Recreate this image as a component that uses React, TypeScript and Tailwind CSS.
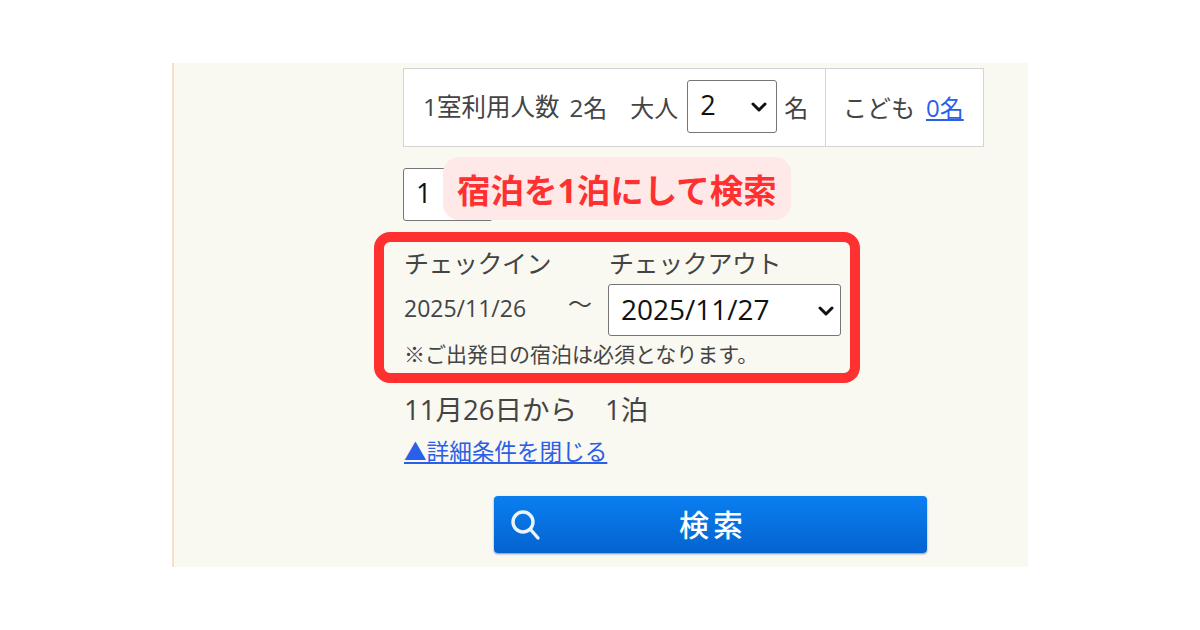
function NativeSelect({ value, className, arrow }: { value: string; className: string; arrow: string }) {
  return (
    <div className={`relative shrink-0 ${className}`}>
      <select
        defaultValue={value}
        className="block w-full h-full appearance-none bg-white border border-[#767676] rounded-[3px] text-[#111] pl-[12px] pb-[2px]"
      >
        <option>{value}</option>
      </select>
      <svg className={`absolute top-[22px] ${arrow}`} width="16" height="10" viewBox="0 0 16 10" fill="none" stroke="#111" strokeWidth="3" strokeLinecap="round" strokeLinejoin="round">
        <path d="M2 2 L8 8 L14 2" />
      </svg>
    </div>
  );
}

export default function App() {
  return (
    <div className="h-[630px] bg-white pt-[63px] pl-[172px] font-['Open_Sans','Noto_Sans_CJK_JP',sans-serif] text-[#444]">
      <div className="relative w-[856px] h-[504px] bg-[#f9f8f1] border-l-2 border-[#f8e0c4] pl-[229px] pt-[5px]">
        <div className="flex w-[581px] h-[79px] bg-white border border-[#d4d4d0] text-[24px]">
          <div className="flex items-center pl-[19px] w-[422px] border-r border-[#d4d4d0] whitespace-nowrap">
            <span className="text-[24.5px]">1室利用人数</span>
            <span className="ml-[10px]">2名</span>
            <span className="ml-[23px]">大人</span>
            <NativeSelect value="2" arrow="right-[10px]" className="ml-[9px] mb-[2px] w-[90px] h-[53px] text-[27px]" />
            <span className="ml-[7px]">名</span>
          </div>
          <div className="flex items-center pl-[17px] whitespace-nowrap">
            <span>こども</span>
            <a className="ml-[11px] text-[#2a5fe8] underline" href="#">0名</a>
          </div>
        </div>

        <div className="mt-[21px] h-[53px]">
          <NativeSelect value="1" arrow="right-[10px]" className="w-[90px] h-[53px] text-[27px]" />
        </div>

        <div className="-ml-[29px] mt-[11px] w-[486px] h-[151px] border-[10px] border-[#fe3030] rounded-[16px] pl-[20px] pt-[3px]">
          <div className="flex text-[25px] leading-[36px]">
            <span className="w-[205px] tracking-[-0.5px]">チェックイン</span>
            <span className="tracking-[-0.4px]">チェックアウト</span>
          </div>
          <div className="flex items-center mt-[3px]">
            <span className="w-[164px] text-[23px] pb-[3px]">2025/11/26</span>
            <span className="w-[40px] text-[24px] -mt-[12px]">〜</span>
            <NativeSelect value="2025/11/27" arrow="right-[7px]" className="w-[233px] h-[52px] text-[28px]" />
          </div>
          <div className="text-[21px] leading-[24px] mt-[6px] whitespace-nowrap">※ご出発日の宿泊は必須となります。</div>
        </div>

        <div className="flex mt-[9px] ml-[1px] text-[27.5px] leading-[36px] whitespace-nowrap">
          <span>11月26日から</span>
          <span className="ml-[28px]">1泊</span>
        </div>
        <a href="#" className="block mt-[9px] ml-[1px] w-fit text-[22.6px] leading-[30px] text-[#2a5fe8] underline whitespace-nowrap">▲詳細条件を閉じる</a>

        <button className="flex items-center relative ml-[91px] mt-[29px] w-[433px] h-[57px] rounded-[4px] bg-gradient-to-b from-[#0a7ff0] to-[#0563d0] shadow-[0_1px_2px_rgba(0,40,90,0.5)] text-white">
          <svg className="ml-[14px]" width="34" height="34" viewBox="0 0 34 34" fill="none" stroke="#eaf4ff" strokeWidth="3.4" strokeLinecap="round">
            <circle cx="15" cy="14" r="10" />
            <path d="M22.5 21.5 L30 30" />
          </svg>
          <span className="absolute left-[185px] text-[30px] font-medium tracking-[4px] leading-[54px]">検索</span>
        </button>

        <div className="absolute left-[269px] top-[94px] h-[63px] px-[14px] pt-[4px] rounded-[16px] bg-[#ffe8e8] text-[#fe3030] text-[33.5px] font-bold flex items-center whitespace-nowrap">
          宿泊を1泊にして検索
        </div>
      </div>
    </div>
  );
}
